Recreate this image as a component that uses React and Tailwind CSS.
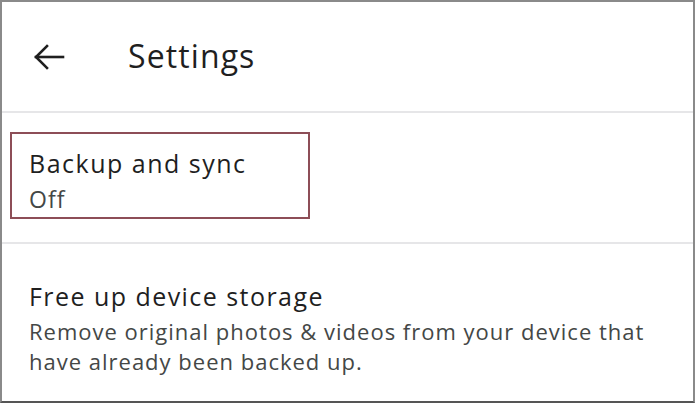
export default function App() {
  return (
    <div className="w-[695px] h-[403px] bg-white border-2 border-[#8a8a8a] border-b-[#555] overflow-hidden flex flex-col" style={{ fontFamily: "'Open Sans', 'Noto Sans', sans-serif" }}>
      <div className="h-[111px] flex items-center border-b-2 border-[#e6e6e8] shrink-0">
        <div className="ml-[31px] w-[34px] h-[30px] flex items-center">
          <svg width="32" height="28" viewBox="0 0 32 28" fill="none" stroke="#1f1f1f" strokeWidth="2.6" strokeLinecap="square">
            <path d="M3 14H30" />
            <path d="M14 3L3 14L14 25" />
          </svg>
        </div>
        <div className="ml-[61px] text-[32px] tracking-[1.1px] text-[#1f1f1f] leading-none pb-[1px]">Settings</div>
      </div>
      <div className="h-[131px] border-b-2 border-[#e6e6e8] shrink-0 pt-[19px] pl-[8px]">
        <div className="w-[300px] h-[87px] border-2 border-[#8d4e57] pl-[17px] pt-[14px]">
          <div className="text-[25px] tracking-[1.5px] leading-[30px] text-[#1f1f1f]">Backup and sync</div>
          <div className="mt-[6px] text-[23px] tracking-[1px] leading-[30px] text-[#444746]">Off</div>
        </div>
      </div>
      <div className="pl-[27px] pt-[35px]">
        <div className="text-[25px] tracking-[1.45px] leading-[34px] text-[#1f1f1f]">Free up device storage</div>
        <div className="mt-[3px] text-[22px] tracking-[1px] leading-[30px] text-[#444746] w-[650px]">Remove original photos &amp; videos from your device that have already been backed up.</div>
      </div>
    </div>
  );
}
